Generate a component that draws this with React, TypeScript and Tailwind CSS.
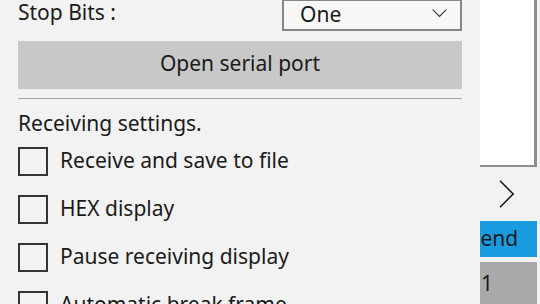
const options = [
  "Receive and save to file",
  "HEX display",
  "Pause receiving display",
  "Automatic break frame",
];

function CheckRow({ label }: { label: string }) {
  return (
    <label className="flex items-center gap-3 h-[30px] shrink-0">
      <span className="w-[30px] h-[29px] shrink-0 border-[2.5px] border-[#333333] bg-[#f2f2f2]" />
      <span className="text-[21px] leading-none text-[#1a1a1a] -mt-[2px]">{label}</span>
    </label>
  );
}

export default function App() {
  return (
    <div
      className="flex w-[540px] h-[304px] overflow-hidden bg-[#f2f2f2]"
      style={{ fontFamily: '"Noto Sans", "Open Sans", sans-serif' }}
    >
      {/* Left: serial settings */}
      <div className="w-[480px] shrink-0 px-[18px] flex flex-col">
        <div className="flex items-center justify-between h-[32px] -mt-[1px] shrink-0">
          <span className="text-[21px] leading-none text-[#1a1a1a] -mt-[6px]">Stop Bits :</span>
          <div className="w-[180px] h-[32px] border-2 border-[#868686] bg-[#f7f7f7] flex items-center justify-between pl-4 pr-[13px]">
            <span className="text-[21px] leading-none text-[#1a1a1a] -mt-[2px]">One</span>
            <svg width="15" height="9" viewBox="0 0 15 9" fill="none" className="-mt-[3px]">
              <path d="M0.7 0.7 7.5 7.5 14.3 0.7" stroke="#333" strokeWidth="1.1" />
            </svg>
          </div>
        </div>

        <button className="mt-[10px] h-[48px] w-full shrink-0 bg-[#c8c8c8] text-[21px] leading-none text-[#1a1a1a] pb-[3px]">
          Open serial port
        </button>

        <div className="mt-[9px] h-px shrink-0 bg-[#a6a6a6]" />

        <p className="mt-[14px] text-[21px] leading-none text-[#1a1a1a] shrink-0">Receiving settings.</p>

        <div className="mt-[12px] flex flex-col gap-[18px] shrink-0">
          {options.map((o) => (
            <CheckRow key={o} label={o} />
          ))}
        </div>
      </div>

      {/* Right: partially visible send panel */}
      <div className="w-[60px] shrink-0 flex flex-col">
        <div className="w-[57px] h-[167px] shrink-0 bg-white border-r-[3px] border-b-2 border-[#8e8e8e]" />
        <div className="h-[54px] w-[57px] shrink-0 flex items-center justify-center">
          <svg width="16" height="28" viewBox="0 0 16 28" fill="none" className="-ml-[3px]">
            <path d="M1 0.8 14.2 14 1 27.2" stroke="#1a1a1a" strokeWidth="1.6" />
          </svg>
        </div>
        <div className="h-[36px] w-[57px] shrink-0 bg-[#1a9be0] flex items-center overflow-hidden">
          <span className="text-[21px] leading-none text-[#1a1a1a] -ml-[11px] -mt-[2px]">Send</span>
        </div>
        <div className="mt-[5px] h-[42px] w-[57px] shrink-0 bg-[#a9a9a9] flex items-center overflow-hidden">
          <span className="text-[21px] leading-none text-[#1a1a1a] ml-[1px]">1</span>
        </div>
      </div>
    </div>
  );
}
